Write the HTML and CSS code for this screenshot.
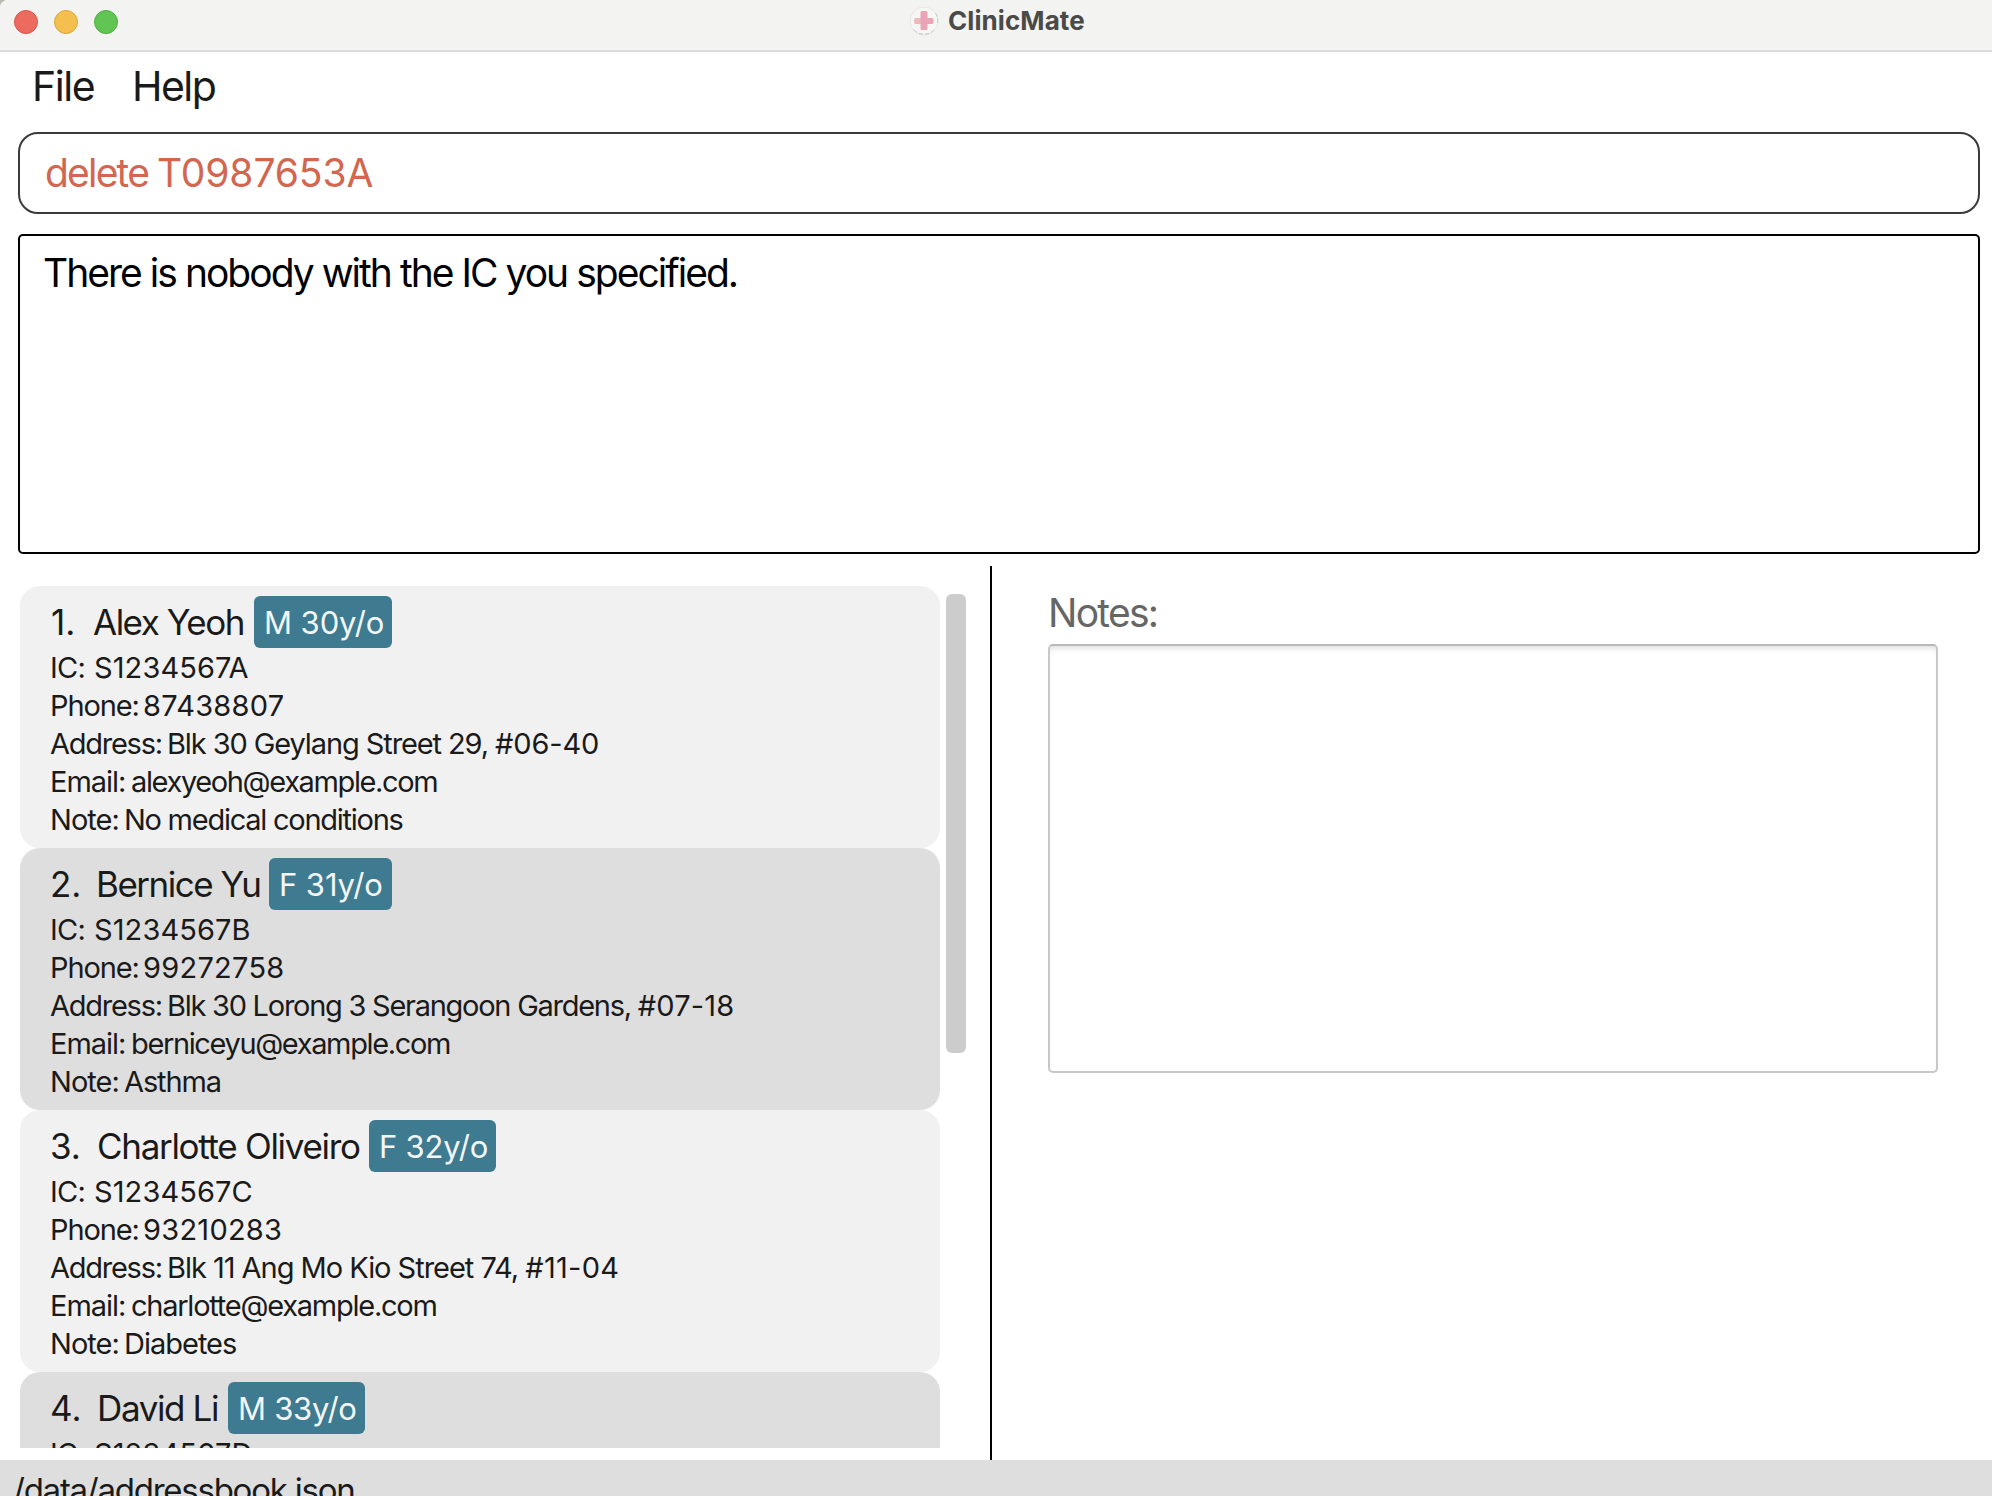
FILE: index.html
```
<!DOCTYPE html>
<html lang="en">
<head>
<meta charset="utf-8">
<title>ClinicMate</title>
<link rel="stylesheet" href="styles.css">
</head>
<body>
<div class="window">
  <header class="titlebar">
    <div class="lights"><i class="light close"></i><i class="light minimise"></i><i class="light zoom"></i></div>
    <div class="title">
      <svg class="logo" width="30" height="30" viewBox="0 0 30 30">
        <circle cx="15" cy="15" r="14" fill="#f6f6f5" stroke="#e6e6e4" stroke-width="1"/>
        <path d="M5 24a14 14 0 0 0 20 0M26.500 7a14 14 0 0 1 2 10" fill="none" stroke="#c6c6c4" stroke-width="1" stroke-dasharray="4 2"/>
        <path d="M13 5h4a1.500 1.500 0 0 1 1.500 1.500V12h4.500a1.500 1.500 0 0 1 1.500 1.500v3a1.500 1.500 0 0 1-1.500 1.500h-4.500v4.500a1.500 1.500 0 0 1-1.500 1.500h-4a1.500 1.500 0 0 1-1.500-1.500V18H7a1.500 1.500 0 0 1-1.500-1.500v-3A1.500 1.500 0 0 1 7 12h4.500V6.500A1.500 1.500 0 0 1 13 5z" fill="#e9a5b5"/>
        <path d="M7 12h4.500v6H7a1.500 1.500 0 0 1-1.500-1.500v-3A1.500 1.500 0 0 1 7 12z" fill="#efb9ba"/>
      </svg>
      <span>ClinicMate</span>
    </div>
  </header>
  <nav class="menu"><span class="file">File</span><span class="help">Help</span></nav>
  <div class="command"><span class="verb">delete</span><span class="arg">T0987653A</span></div>
  <div class="result">There is nobody with the IC you specified.</div>
  <main class="split">
    <section class="list-pane">
      <div class="cards">
        <article class="card">
          <div class="head"><span class="index">1.</span><span class="name">Alex Yeoh</span><span class="tag">M 30y/o</span></div>
          <div class="row ic"><span>IC:</span><b>S1234567A</b></div>
          <div class="row phone"><span>Phone:</span><b>87438807</b></div>
          <div class="row address"><span>Address:</span><b>Blk 30 Geylang Street 29, <i>#06-40</i></b></div>
          <div class="row email"><span>Email:</span><b>alexyeoh@example.com</b></div>
          <div class="row note"><span>Note:</span><b>No medical conditions</b></div>
        </article>
        <article class="card">
          <div class="head"><span class="index">2.</span><span class="name">Bernice Yu</span><span class="tag">F 31y/o</span></div>
          <div class="row ic"><span>IC:</span><b>S1234567B</b></div>
          <div class="row phone"><span>Phone:</span><b>99272758</b></div>
          <div class="row address"><span>Address:</span><b>Blk 30 Lorong 3 Serangoon Gardens, <i>#07-18</i></b></div>
          <div class="row email"><span>Email:</span><b>berniceyu@example.com</b></div>
          <div class="row note"><span>Note:</span><b>Asthma</b></div>
        </article>
        <article class="card">
          <div class="head"><span class="index">3.</span><span class="name">Charlotte Oliveiro</span><span class="tag">F 32y/o</span></div>
          <div class="row ic"><span>IC:</span><b>S1234567C</b></div>
          <div class="row phone"><span>Phone:</span><b>93210283</b></div>
          <div class="row address"><span>Address:</span><b>Blk 11 Ang Mo Kio Street 74, <i>#11-04</i></b></div>
          <div class="row email"><span>Email:</span><b>charlotte@example.com</b></div>
          <div class="row note"><span>Note:</span><b>Diabetes</b></div>
        </article>
        <article class="card">
          <div class="head"><span class="index">4.</span><span class="name">David Li</span><span class="tag">M 33y/o</span></div>
          <div class="row ic"><span>IC:</span><b>S1234567D</b></div>
        </article>
      </div>
      <div class="scrollbar"></div>
    </section>
    <section class="notes-pane">
      <div class="notes-label">Notes:</div>
      <div class="notes-box"></div>
    </section>
  </main>
  <footer class="status">/data/addressbook.json</footer>
</div>
</body>
</html>
```
FILE: styles.css
```
* { box-sizing: border-box; }
html { background: #b9b9b0; }
body { margin: 0; font-family: Inter, "Liberation Sans", sans-serif; color: #1a1a1a; }
.window {
  width: 1992px; height: 1496px; overflow: hidden; background: #fff;
  border-top-left-radius: 8px; display: flex; flex-direction: column; white-space: nowrap;
}

.titlebar {
  flex: none; height: 52px; display: grid; grid-template-columns: 909px 1fr;
  background: #f3f3f1; border-bottom: 2px solid #dcdcdc; align-items: start;
}
.lights { display: flex; gap: 16px; padding: 10px 0 0 14px; }
.light { width: 24px; height: 24px; border-radius: 50%; border: 1px solid; }
.close { background: #ec6a5e; border-color: #d85549; }
.minimise { background: #f4bf4f; border-color: #dba63a; }
.zoom { background: #61c554; border-color: #4fae42; }
.title { display: flex; align-items: center; gap: 9px; height: 41px; font-size: 26px; font-weight: 700; color: #4a4a48; line-height: 42px; letter-spacing: .08px; }

.menu { flex: none; height: 80px; display: flex; font-size: 41px; line-height: 68px; padding-left: 32px; }
.menu .file { width: 100px; letter-spacing: -1.4px; }
.menu .help { letter-spacing: -1.5px; }

.command {
  flex: none; margin: 0 12px 0 18px; height: 82px; border: 2px solid #3a3a3a; border-radius: 20px;
  display: flex; padding-left: 25px; font-size: 39px; line-height: 78px; color: #d2664f;
}
.command .verb { width: 112px; letter-spacing: -1.8px; }
.command .arg { letter-spacing: -.1px; }

.result {
  flex: none; margin: 20px 12px 0 18px; height: 320px; border: 2px solid #000; border-radius: 5px;
  padding: 12px 0 0 23px; font-size: 39px; line-height: 49px; letter-spacing: -1.98px; color: #000;
}

.split { flex: none; height: 894px; margin-top: 12px; display: grid; grid-template-columns: 992px 1fr; }
.list-pane { border-right: 2px solid #000; display: flex; gap: 6px; padding: 20px 0 12px 20px; height: 894px; }
.cards { width: 920px; overflow: hidden; }
.card { height: 262px; padding: 10px 0 0 30px; border-radius: 20px; background: #f1f1f1; }
.card:nth-child(even) { background: #dedede; }
.scrollbar { width: 20px; height: 459px; margin-top: 8px; background: #ccc; border-radius: 6px; }

.head { display: flex; height: 53px; font-size: 35px; line-height: 52px; }
.index { width: 43px; }
.card:first-child .index { padding-left: 1px; }
.name { width: 161px; letter-spacing: -1.5px; }
.tag {
  width: 138px; height: 52px; border-radius: 6px; background: #3e7b91; color: #f3f6f7;
  padding-left: 10px; font-size: 31px; line-height: 53px; letter-spacing: -.08px;
}
.card:nth-child(2) .index { width: 46px; }
.card:nth-child(2) .name { width: 173px; letter-spacing: -1.5px; }
.card:nth-child(2) .tag { width: 123px; }
.card:nth-child(3) .index { width: 47px; }
.card:nth-child(3) .name { width: 272px; letter-spacing: -1.31px; }
.card:nth-child(3) .tag { width: 127px; letter-spacing: -.2px; }
.card:nth-child(4) .index { width: 47px; }
.card:nth-child(4) .name { width: 131px; letter-spacing: -1.37px; }
.card:nth-child(4) .tag { width: 137px; letter-spacing: -.25px; }

.row { display: flex; height: 38px; font-size: 29px; line-height: 38px; }
.row b { font-weight: 400; }
.row i { font-style: normal; letter-spacing: -.15px; }
.ic span { width: 44px; letter-spacing: -.7px; }
.ic b { letter-spacing: .1px; }
.phone span { width: 93px; letter-spacing: -1.1px; }
.phone b { letter-spacing: .25px; }
.address span { width: 117px; letter-spacing: -1.25px; }
.address b { letter-spacing: -1.1px; white-space: pre; }
.email span { width: 81px; letter-spacing: -1.04px; }
.email b { letter-spacing: -1.37px; }
.note span { width: 74px; letter-spacing: -.95px; }
.note b { letter-spacing: -1.26px; }
.card:nth-child(2) .address b { letter-spacing: -1.26px; }
.card:nth-child(2) .address i { letter-spacing: .15px; }
.card:nth-child(2) .note b { letter-spacing: -1.1px; }
.card:nth-child(3) .address b { letter-spacing: -1.03px; }
.card:nth-child(3) .address i { letter-spacing: .3px; }
.card:nth-child(3) .email b { letter-spacing: -1.25px; }
.card:nth-child(3) .note b { letter-spacing: -1px; }

.notes-pane { padding: 21px 54px 0 56px; }
.notes-label { height: 57px; font-size: 39px; line-height: 51px; letter-spacing: -1.75px; color: #666; }
.notes-box {
  height: 429px; border: 2px solid #c8c8c8; border-top-color: #b9b9b9; border-radius: 5px;
  box-shadow: inset 0 6px 6px -4px #ddd;
}

.status { flex: none; height: 36px; background: #dedede; padding: 10px 0 0 13px; font-size: 33px; line-height: 40px; letter-spacing: -1.25px; }
```
